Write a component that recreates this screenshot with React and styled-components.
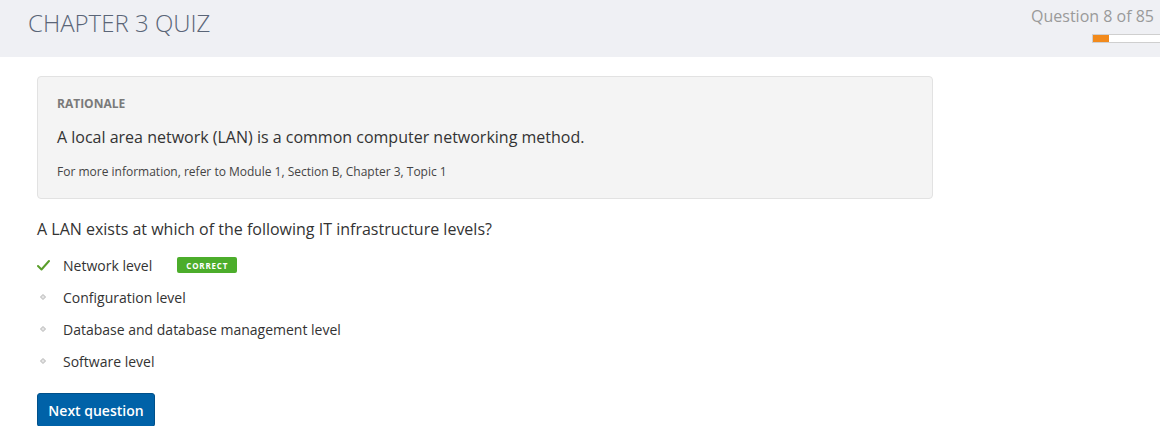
import React from "react";
import styled, { createGlobalStyle } from "styled-components";

const Global = createGlobalStyle`
  html, body { margin: 0; padding: 0; background: #fff; }
  body { font-family: "Open Sans", "Liberation Sans", sans-serif; color: #333; }
`;

const Header = styled.header`
  height: 57px;
  background: #eff0f4;
  display: flex;
  justify-content: space-between;
  align-items: flex-start;
  padding: 0 6px 0 28px;
  box-sizing: border-box;
`;

const Title = styled.h1`
  margin: 8px 0 0;
  font-size: 24px;
  font-weight: 300;
  color: #5a6577;
  line-height: 30px;
`;

const Progress = styled.div`
  display: flex;
  flex-direction: column;
  align-items: flex-end;
`;

const ProgressLabel = styled.div`
  margin-top: 6px;
  font-size: 16px;
  color: #9a9a9a;
  line-height: 20px;
`;

const Bar = styled.div`
  margin-top: 8px;
  margin-right: -6px;
  width: 68px;
  height: 9px;
  box-sizing: border-box;
  border: 1px solid #cfcfcf;
  border-right: none;
  background: #fff;
  display: flex;
`;

const Fill = styled.div`
  height: 100%;
  background: #f28a1c;
`;

const Main = styled.main`
  padding: 19px 0 0 37px;
  width: 896px;
`;

const Rationale = styled.section`
  background: #f4f4f4;
  border: 1px solid #e2e2e2;
  border-radius: 4px;
  padding: 19px 19px 18px;
`;

const RatLabel = styled.div`
  font-size: 12px;
  font-weight: 700;
  color: #7a7a7a;
  line-height: 16px;
`;

const RatText = styled.p`
  margin: 14px 0 0;
  font-size: 16px;
  color: #333;
  line-height: 22px;
`;

const RatRef = styled.p`
  margin: 16px 0 0;
  font-size: 12px;
  color: #444;
  line-height: 16px;
`;

const Question = styled.p`
  margin: 18px 0 0;
  font-size: 16px;
  color: #333;
  line-height: 24px;
`;

const Options = styled.ul`
  list-style: none;
  margin: 8px 0 0;
  padding: 0;
`;

const Option = styled.li`
  display: flex;
  align-items: center;
  height: 32px;
  font-size: 14px;
  color: #333;
`;

const Marker = styled.span`
  width: 26px;
  display: flex;
  align-items: center;
  justify-content: flex-start;
`;

const Badge = styled.span`
  margin-left: 25px;
  background: #4cad2b;
  color: #fff;
  font-size: 8px;
  font-weight: 700;
  letter-spacing: 0.8px;
  border-radius: 2px;
  height: 16px;
  width: 60px;
  display: inline-flex;
  align-items: center;
  justify-content: center;
`;

const Button = styled.button`
  margin-top: 16px;
  background: #0062a8;
  color: #fff;
  border: 1px solid #00508a;
  border-radius: 3px;
  font-family: "Open Sans", "Liberation Sans", sans-serif;
  font-size: 14px;
  font-weight: 600;
  height: 34px;
  width: 118px;
  padding: 0;
  cursor: pointer;
`;

const Check = () => (
  <svg width="13" height="12" viewBox="0 0 13 12">
    <path d="M1 7 L4.5 10.5 L12 2" stroke="#5a9e2a" strokeWidth="2" fill="none" strokeLinecap="round" strokeLinejoin="round" />
  </svg>
);

const Dot = () => (
  <svg width="12" height="10" viewBox="0 0 12 10">
    <path d="M6 2.5 L8.5 5 L6 7.5 L3.5 5 Z" fill="#e4e4e4" stroke="#b4b4b4" strokeWidth="1" />
  </svg>
);

const options = [
  { text: "Network level", correct: true },
  { text: "Configuration level" },
  { text: "Database and database management level" },
  { text: "Software level" },
];

export default function App() {
  return (
    <>
      <Global />
      <Header>
        <Title>CHAPTER 3 QUIZ</Title>
        <Progress>
          <ProgressLabel>Question 8 of 85</ProgressLabel>
          <Bar>
            <Fill style={{ width: `${(8 / 85) * 170}px` }} />
          </Bar>
        </Progress>
      </Header>
      <Main>
        <Rationale>
          <RatLabel>RATIONALE</RatLabel>
          <RatText>A local area network (LAN) is a common computer networking method.</RatText>
          <RatRef>For more information, refer to Module 1, Section B, Chapter 3, Topic 1</RatRef>
        </Rationale>
        <Question>A LAN exists at which of the following IT infrastructure levels?</Question>
        <Options>
          {options.map((o) => (
            <Option key={o.text}>
              <Marker>{o.correct ? <Check /> : <Dot />}</Marker>
              {o.text}
              {o.correct && <Badge>CORRECT</Badge>}
            </Option>
          ))}
        </Options>
        <Button>Next question</Button>
      </Main>
    </>
  );
}
